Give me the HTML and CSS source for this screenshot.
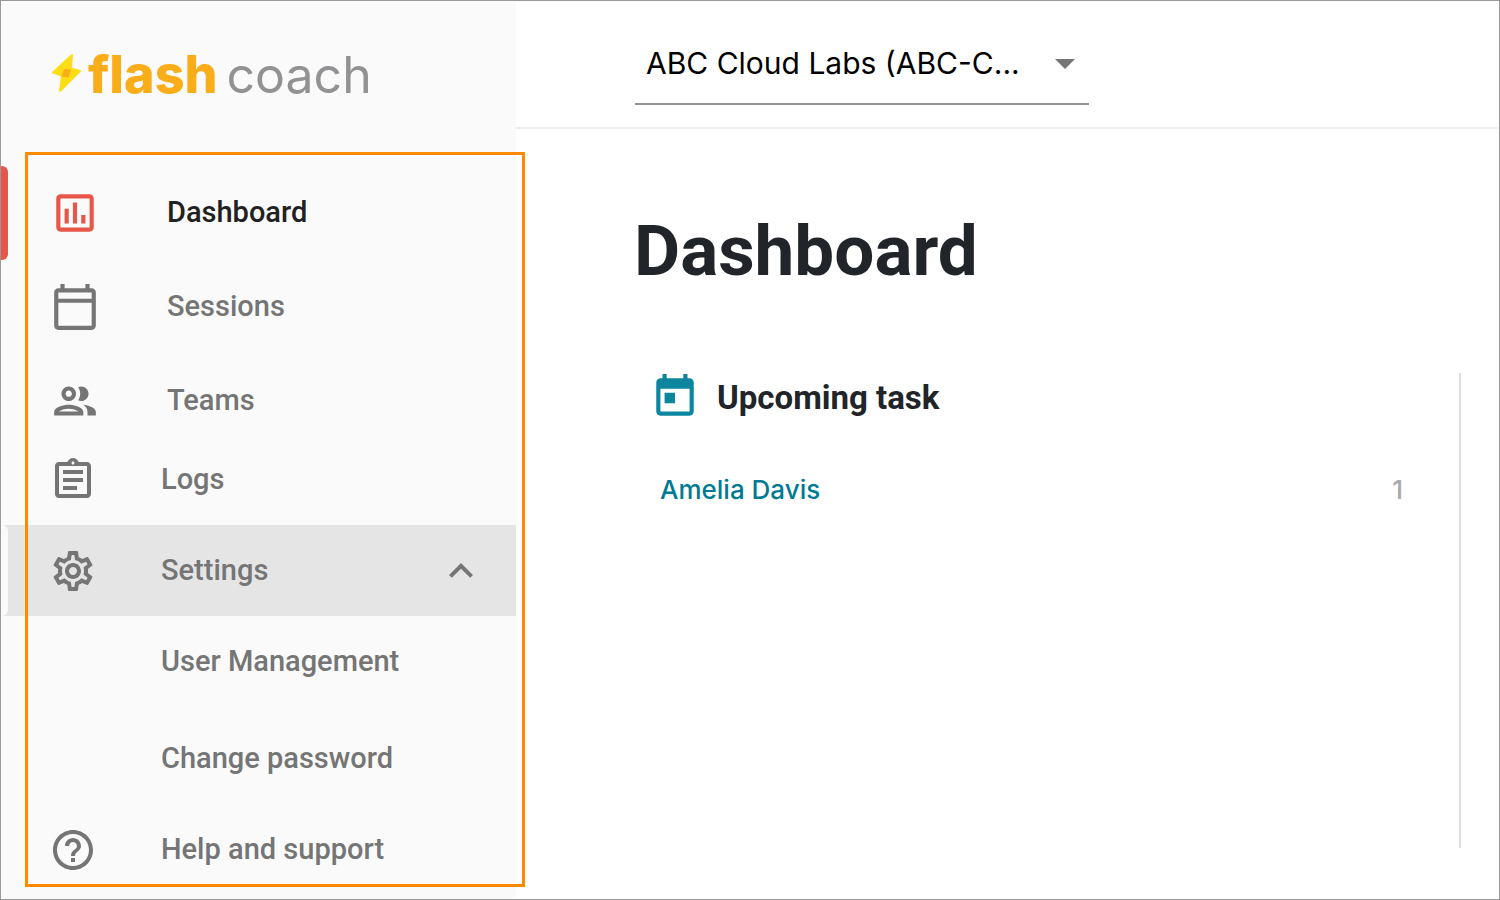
FILE: index.html
```html
<!DOCTYPE html>
<html lang="en">
<head>
  <meta charset="UTF-8">
  <meta name="viewport" content="width=device-width, initial-scale=1.0">
  <title>Flash Coach - Dashboard</title>
  <link rel="stylesheet" href="styles.css">
</head>
<body>
  <div class="app">
    <aside class="sidebar">
      <a href="#" class="logo">
        <svg class="logo-bolt" viewBox="0 0 30 40" aria-hidden="true">
          <path fill="#ffdd15" stroke="#ffdd15" stroke-width="2" stroke-linejoin="round" d="M21 2 2 19.500l9 3L9 38l20-20-9-2.500z"/>
          <path fill="#f8ad19" d="m13 16 7 .5-2.500 8-7-1z"/>
        </svg>
        <span class="logo-flash">flash</span>
        <span class="logo-coach">coach</span>
      </a>

      <nav class="menu">
        <a href="#" class="menu-item active">
          <svg class="icon" viewBox="0 0 24 24"><path d="M9 17H7v-7h2v7zm4 0h-2V7h2v10zm4 0h-2v-4h2v4zm2 2H5V5h14v14zm0-16H5c-1.100 0-2 .9-2 2v14c0 1.100.9 2 2 2h14c1.100 0 2-.9 2-2V5c0-1.100-.9-2-2-2z"/></svg>
          <span>Dashboard</span>
        </a>
        <a href="#" class="menu-item">
          <svg class="icon" viewBox="0 0 24 24"><path d="M20 3h-1V1h-2v2H7V1H5v2H4c-1.100 0-2 .9-2 2v16c0 1.100.9 2 2 2h16c1.100 0 2-.9 2-2V5c0-1.100-.9-2-2-2zm0 18H4V10h16v11zm0-13H4V5h16v3z"/></svg>
          <span>Sessions</span>
        </a>
        <a href="#" class="menu-item">
          <svg class="icon" viewBox="0 0 24 24"><path d="M9 13.750c-2.340 0-7 1.170-7 3.500V19h14v-1.750c0-2.330-4.660-3.500-7-3.500zM4.340 17c.84-.58 2.870-1.250 4.660-1.250s3.820.67 4.660 1.250H4.340zM9 12c1.930 0 3.500-1.570 3.500-3.500S10.930 5 9 5 5.500 6.570 5.500 8.500 7.070 12 9 12zm0-5c.83 0 1.500.67 1.500 1.500S9.830 10 9 10s-1.500-.67-1.500-1.500S8.170 7 9 7zm7.040 6.810c1.160.84 1.960 1.960 1.960 3.440V19h4v-1.750c0-2.020-3.500-3.170-5.960-3.440zM15 12c1.930 0 3.500-1.570 3.500-3.500S16.930 5 15 5c-.54 0-1.040.13-1.500.35.63.89 1 1.980 1 3.150s-.37 2.260-1 3.150c.46.22.96.35 1.500.35z"/></svg>
          <span>Teams</span>
        </a>
        <a href="#" class="menu-item compact logs">
          <svg class="icon" viewBox="0 0 24 24"><path d="M7 15h7v2H7zm0-4h10v2H7zm0-4h10v2H7zm12-4h-4.180C14.400 1.840 13.300 1 12 1c-1.300 0-2.400.84-2.820 2H5c-.14 0-.27.01-.4.04-.39.08-.74.28-1.010.55-.18.18-.33.4-.43.64-.1.23-.16.49-.16.77v14c0 .27.06.54.16.78s.25.45.43.64c.27.27.62.47 1.010.55.13.02.26.03.4.03h14c1.100 0 2-.9 2-2V5c0-1.100-.9-2-2-2zm-7-.25c.41 0 .75.34.75.75s-.34.75-.75.75-.75-.34-.75-.75.34-.75.75-.75zM19 19H5V5h14v14z"/></svg>
          <span>Logs</span>
        </a>
        <button type="button" class="menu-item compact open" aria-expanded="true" aria-controls="settings-menu">
          <svg class="icon" viewBox="0 0 24 24"><path d="M19.430 12.980c.04-.32.07-.64.07-.98 0-.34-.03-.66-.07-.98l2.110-1.650c.19-.15.24-.42.12-.64l-2-3.460c-.09-.16-.26-.25-.44-.25-.06 0-.12.01-.17.03l-2.490 1c-.52-.4-1.080-.73-1.690-.98l-.38-2.650C14.460 2.180 14.250 2 14 2h-4c-.25 0-.46.18-.49.42l-.38 2.650c-.61.25-1.170.59-1.690.98l-2.490-1c-.06-.02-.12-.03-.18-.03-.17 0-.34.09-.43.25l-2 3.460c-.13.22-.07.49.12.64l2.110 1.650c-.04.32-.07.65-.07.98 0 .33.03.66.07.98l-2.110 1.650c-.19.15-.24.42-.12.64l2 3.460c.09.16.26.25.44.25.06 0 .12-.01.17-.03l2.490-1c.52.4 1.080.73 1.690.98l.38 2.650c.03.24.24.42.49.42h4c.25 0 .46-.18.49-.42l.38-2.650c.61-.25 1.170-.59 1.690-.98l2.490 1c.06.02.12.03.18.03.17 0 .34-.09.43-.25l2-3.460c.12-.22.07-.49-.12-.64l-2.110-1.650zm-1.980-1.710c.04.31.05.52.05.73 0 .21-.02.43-.05.73l-.14 1.130.89.7 1.080.84-.7 1.210-1.270-.51-1.040-.42-.9.68c-.43.32-.84.56-1.250.73l-1.060.43-.16 1.130-.2 1.350h-1.400l-.19-1.350-.16-1.130-1.060-.43c-.43-.18-.83-.41-1.230-.71l-.91-.7-1.060.43-1.270.51-.7-1.210 1.080-.84.89-.7-.14-1.130c-.03-.31-.05-.54-.05-.74s.02-.43.05-.73l.14-1.130-.89-.7-1.080-.84.7-1.210 1.270.51 1.040.42.9-.68c.43-.32.84-.56 1.250-.73l1.060-.43.16-1.130.2-1.350h1.390l.19 1.350.16 1.130 1.060.43c.43.18.83.41 1.230.71l.91.7 1.060-.43 1.270-.51.7 1.210-1.070.85-.89.7.14 1.130zM12 8c-2.210 0-4 1.790-4 4s1.790 4 4 4 4-1.790 4-4-1.790-4-4-4zm0 6c-1.100 0-2-.9-2-2s.9-2 2-2 2 .9 2 2-.9 2-2 2z"/></svg>
          <span>Settings</span>
          <svg class="icon chevron" viewBox="0 0 24 24"><path d="M12 8l-6 6 1.410 1.410L12 10.830l4.590 4.580L18 14z"/></svg>
        </button>
        <div class="submenu" id="settings-menu">
          <a href="#" class="submenu-item">User Management</a>
          <a href="#" class="submenu-item">Change password</a>
        </div>
        <a href="#" class="menu-item compact">
          <svg class="icon" viewBox="0 0 24 24"><path d="M11 18h2v-2h-2v2zm1-16C6.480 2 2 6.480 2 12s4.480 10 10 10 10-4.480 10-10S17.520 2 12 2zm0 18c-4.410 0-8-3.590-8-8s3.590-8 8-8 8 3.590 8 8-3.590 8-8 8zm0-14c-2.210 0-4 1.790-4 4h2c0-1.100.9-2 2-2s2 .9 2 2c0 2-3 1.750-3 5h2c0-2.250 3-2.500 3-5 0-2.210-1.790-4-4-4z"/></svg>
          <span>Help and support</span>
        </a>
        <div class="menu-highlight"></div>
      </nav>
    </aside>

    <div class="page">
      <header class="topbar">
        <div class="account">
          <select class="account-select" aria-label="Account">
            <option>ABC Cloud Labs (ABC-C...</option>
          </select>
          <svg class="account-arrow" viewBox="0 0 20 10" aria-hidden="true"><path d="M0 0h20L10 10z"/></svg>
        </div>
      </header>

      <main class="content">
        <h1>Dashboard</h1>
        <section class="tasks">
          <h2>
            <svg class="task-icon" viewBox="0 0 24 24" aria-hidden="true"><path d="M19 3h-1V1h-2v2H8V1H6v2H5c-1.110 0-1.990.9-1.990 2L3 19c0 1.100.89 2 2 2h14c1.100 0 2-.9 2-2V5c0-1.100-.9-2-2-2zm0 16H5V8h14v11zM7 10h5v5H7v-5z"/></svg>
            Upcoming task
          </h2>
          <div class="task">
            <a href="#">Amelia Davis</a>
            <span class="task-count">1</span>
          </div>
        </section>
      </main>
    </div>
  </div>
</body>
</html>
```
FILE: styles.css
```css
* {
  box-sizing: border-box;
}

body {
  margin: 0;
  font-family: Roboto, sans-serif;
  color: #212529;
  background-color: #fff;
}

a {
  text-decoration: none;
}

.app {
  display: flex;
  min-height: 100vh;
  border: 1px solid #999;
}

/* Sidebar */
.sidebar {
  flex: 0 0 515px;
  background-color: #fafafa;
}

.logo {
  display: flex;
  align-items: baseline;
  height: 165px;
  padding: 44px 0 0 50px;
  font-family: Inter, sans-serif;
  font-size: 52px;
  line-height: 60px;
}

.logo-bolt {
  width: 30px;
  height: 40px;
  margin-right: 7px;
}

.logo-flash {
  font-weight: 800;
  color: #f8ad19;
}

.logo-coach {
  margin-left: 9px;
  font-size: 50px;
  font-weight: 400;
  color: #929295;
}

.menu {
  position: relative;
}

.menu-item {
  position: relative;
  display: flex;
  align-items: center;
  width: 100%;
  height: 94px;
  padding: 0 31px 0 49px;
  border: none;
  background: none;
  font-family: inherit;
  font-size: 29px;
  font-weight: 500;
  color: #757575;
  text-align: left;
  cursor: pointer;
}

.menu-item span {
  padding-bottom: 2px;
}

.icon {
  width: 50px;
  height: 50px;
  margin-right: 67px;
  fill: #757575;
}

.menu-item.active {
  color: #212121;
}

.menu-item.active .icon {
  fill: #e65649;
}

.menu-item.active::before,
.menu-item.open::before {
  content: "";
  position: absolute;
  top: 0;
  bottom: 0;
  left: 0;
  width: 7px;
  border-radius: 0 6px 6px 0;
  background-color: #e65649;
}

.menu-item.compact {
  height: 91px;
  padding-left: 48px;
}

.compact .icon {
  width: 48px;
  height: 48px;
  margin-right: 64px;
}

.menu-item.logs {
  height: 63px;
  margin-bottom: 14px;
}

.menu-item.open {
  background-color: #e5e5e5;
}

.menu-item.open::before {
  background-color: #fafafa;
}

.compact .chevron {
  margin: 0 0 0 auto;
}

.submenu {
  display: grid;
  gap: 6px;
}

.submenu-item {
  display: flex;
  align-items: center;
  height: 91px;
  padding: 0 0 2px 160px;
  font-size: 29px;
  font-weight: 500;
  color: #757575;
}

.menu-highlight {
  position: absolute;
  top: -14px;
  right: -9px;
  bottom: 8px;
  left: 24px;
  border: 3px solid #ff8a00;
  pointer-events: none;
}

/* Main area */
.page {
  flex: 1;
  min-width: 0;
  display: flex;
  flex-direction: column;
}

.topbar {
  padding: 22px 38px 22px 119px;
  border-bottom: 2px solid #efefef;
}

.account {
  position: relative;
  max-width: 454px;
}

.account-select {
  display: block;
  width: 100%;
  height: 82px;
  padding: 0 60px 0 11px;
  border: none;
  border-bottom: 2px solid #949494;
  border-radius: 0;
  appearance: none;
  background: none;
  font-family: Inter, sans-serif;
  font-size: 30px;
  color: #000;
}

.account-arrow {
  position: absolute;
  top: 36px;
  right: 14px;
  width: 20px;
  height: 10px;
  fill: #757575;
  pointer-events: none;
}

.content {
  flex: 1;
  display: flex;
  flex-direction: column;
  padding: 80px 38px 51px 118px;
}

h1 {
  margin: 0 0 80px;
  font-size: 71px;
  line-height: 84px;
}

.tasks {
  flex: 1;
  padding: 0 56px 0 16px;
  border-right: 2px solid #dedede;
}

h2 {
  display: flex;
  align-items: center;
  gap: 17px;
  height: 48px;
  margin: 0;
  font-size: 33px;
}

.task-icon {
  width: 50px;
  height: 50px;
  fill: #0b869e;
}

.task {
  display: flex;
  justify-content: space-between;
  padding: 54px 0 0 10px;
  font-family: Inter, sans-serif;
  font-size: 26px;
  font-weight: 500;
  line-height: 30px;
}

.task a {
  color: #007a94;
}

.task-count {
  color: #a9a9a9;
}
```
